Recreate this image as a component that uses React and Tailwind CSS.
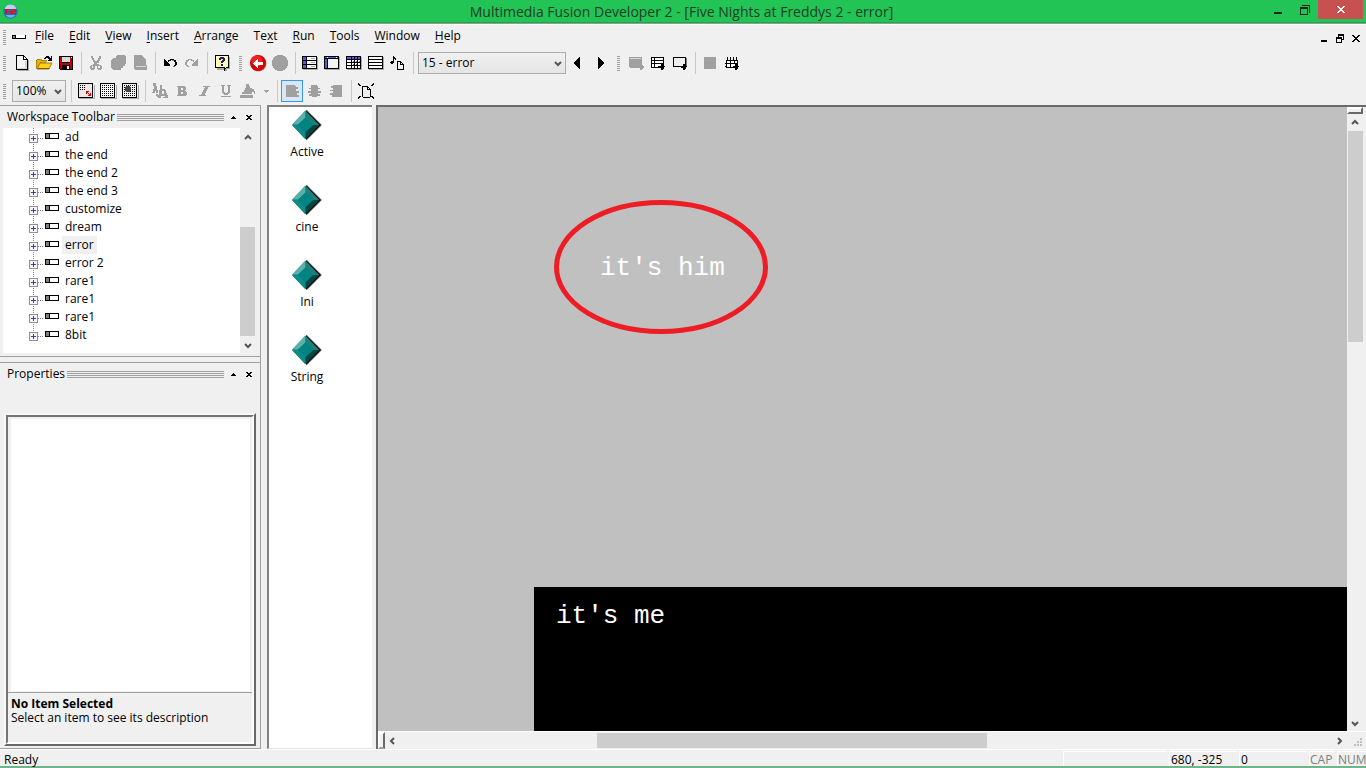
import React from "react";

const K = "#000";
const G = "#a0a0a0";

function Ico({ children, w = 18, h = 18 }) {
  return (
    <svg width={w} height={h} viewBox={`0 0 ${w} ${h}`} shapeRendering="crispEdges" fill="none" className="block shrink-0" aria-hidden="true">
      {children}
    </svg>
  );
}

const dots = (x0, y0, nx, ny, step = 2) => {
  let d = "";
  for (let j = 0; j < ny; j++) for (let i = 0; i < nx; i++) d += `M${x0 + i * step} ${y0 + j * step}h1v1h-1z`;
  return d;
};

const icons = {
  newFile: (
    <Ico>
      <path d="M5 16h10v1H5zM15 6h1v11h-1z" fill="#aaa" />
      <path d="M3.5 1.5h7l4 4v10h-11z" fill="#f4f4f4" stroke={K} />
      <path d="M10 2h1v3h3v1h-4z" fill={K} />
      <path d="M11 3h1v1h1v1h-2z" fill="#fff" />
      <path d="M12 7h2v8H5v-1h7z" fill="#d4d4d4" />
    </Ico>
  ),
  open: (
    <Ico>
      <path d="M1 6h1V5h4v1h5v2H5v2H4v2H3v2H1z" fill="#e8b400" stroke="#8a6500" strokeWidth="0.6" />
      <path d="M5 9h12l-3 6H2z" fill="#ffd21c" shapeRendering="auto" stroke="#8a6500" strokeWidth="0.8" />
      <path d="M3 14h11v1H2z" fill="#7a5800" />
      <path d="M9 4h1V3h1V2h3v1h1v1h1V2h1v5h-4V6h1V5h-1V4h-2v1H9z" fill={K} />
    </Ico>
  ),
  save: (
    <Ico>
      <path d="M2 2h14v14H3v-1H2z" fill={K} />
      <path d="M3 3h2v6h8V3h2v12H3z" fill="#b50010" />
      <path d="M5 3h8v5H5z" fill="#d8d8d8" />
      <path d="M5 11h8v4H5z" fill={K} />
      <path d="M10 12h2v3h-2z" fill="#fff" />
      <path d="M14 3h1v1h-1z" fill="#fff" />
    </Ico>
  ),
  cut: (
    <Ico>
      <path d="M4 2h2v2h1v2h1v1h2V6h1V4h1V2h2v3h-1v2h-1v2h-2v1h2v1h2v1h1v3h-1v1h-3v-1h-1v-3H8v3H7v1H4v-1H3v-3h1v-1h2v-1h1V8H6V6H5V4H4zM5 12v2h1v-2zM11 12v2h2v-2z" fill={G} fillRule="evenodd" />
    </Ico>
  ),
  copy: (
    <Ico>
      <path d="M8 1h7l2 2v7h-1v2h-2v2h-2v2H4v-1H3v-1H2V6h1V5h1V4h3V2h1z" fill={G} />
    </Ico>
  ),
  paste: (
    <Ico>
      <path d="M3 1h8v1h1v1h1v1h1v1h1v6h1v5H4v-1H3z" fill={G} />
      <path d="M5 12h10v1H5z" fill="#d8d8d8" />
    </Ico>
  ),
  undo: (
    <Ico>
      <path d="M3 5h1v1h1v1h1v1h1v1h1v1h1v2H3z" fill={K} />
      <path d="M7 6h2V5h4v1h2v2h1v3h-1v1h-1v1h-2v-1h1v-1h1V8h-1V7h-1V6h-2v1H8v1H7z" fill={K} />
      <path d="M12 12h2v1h-2zM11 6h2v1h-2z" fill="#777" />
    </Ico>
  ),
  redo: (
    <Ico>
      <path d="M15 5h-1v1h-1v1h-1v1h-1v1h-1v1H9v2h6z" fill={G} />
      <path d="M11 6H9V5H5v1H3v2H2v3h1v1h1v1h2v-1H5v-1H4V8h1V7h1V6h2v1h2v1h1z" fill={G} />
    </Ico>
  ),
  help: (
    <Ico>
      <path d="M4 3h13v12h-3v2h-2v-1h-8z" fill="#aaa" />
      <path d="M2.500 1.500h13v12h-2l-2.500 3v-3h-8.500z" fill="#fffbb0" stroke={K} />
      <path d="M6 4h1V3h4v1h1v3h-1v1h-1v1H8V7h1V6h1V5H8v1H6zM8 10h2v2H8z" fill="#1b1b80" />
    </Ico>
  ),
  back: (
    <Ico>
      <circle cx="9.500" cy="9.500" r="8" fill="#999" shapeRendering="auto" />
      <circle cx="9" cy="9" r="8" fill="#d80000" shapeRendering="auto" />
      <circle cx="8" cy="7" r="5.500" fill="#f32222" shapeRendering="auto" />
      <path d="M4 9h1V8h1V7h1V6h1V5h1v3h5v3H9v3H8v-1H7v-1H6v-1H5v-1H4z" fill="#fff" />
    </Ico>
  ),
  disc: (
    <Ico>
      <path d="M6 1h6v1h2v1h1v1h1v2h1v6h-1v2h-1v1h-1v1h-2v1H6v-1H4v-1H3v-1H2v-2H1V6h1V4h1V3h1V2h2z" fill={G} />
    </Ico>
  ),
  storyboard: (
    <Ico>
      <path d="M2 15h14V3h1v13H2z" fill="#aaa" />
      <path d="M1 2h15v13H1z" fill={K} />
      <path d="M2 3h3v3H2zM2 7h3v3H2zM2 11h3v3H2z" fill="#5a5ad8" />
      <path d="M6 3h9v3H6zM6 7h9v3H6zM6 11h9v3H6z" fill="#f8f8f8" />
      <path d="M10 4h4v1h-4zM10 8h4v1h-4zM10 12h4v1h-4z" fill="#aaa" />
    </Ico>
  ),
  frame: (
    <Ico>
      <path d="M2 15h14V3h1v13H2z" fill="#aaa" />
      <path d="M1 2h15v13H1z" fill={K} />
      <path d="M2 3h13v1H2zM2 5h2v9H2z" fill="#5a5ad8" />
      <path d="M5 5h10v9H5z" fill="#f4f4f4" />
      <path d="M4 3h1v1H4zM13 3h1v1h-1z" fill="#fff" />
    </Ico>
  ),
  events: (
    <Ico>
      <path d="M2 15h14V3h1v13H2z" fill="#aaa" />
      <path d="M1 2h15v13H1z" fill={K} />
      <path d="M2 6h4v2H2zM2 9h4v2H2zM2 12h4v2H2z" fill="#fff" />
      <path d="M2 3h4v2H2zM7 3h2v2H7zM10 3h2v2h-2zM13 3h2v2h-2z" fill="#5a5ad8" />
      <path d="M7 6h2v2H7zM10 6h2v2h-2zM13 6h2v2h-2zM7 9h2v2H7zM10 9h2v2h-2zM13 9h2v2h-2zM7 12h2v2H7zM10 12h2v2h-2zM13 12h2v2h-2z" fill="#fff" />
      <path d="M8 7h1v1H8zM11 7h1v1h-1zM11 10h1v1h-1zM14 7h1v1h-1zM8 10h1v1H8z" fill="#5a5ad8" />
    </Ico>
  ),
  list: (
    <Ico>
      <path d="M2 15h14V3h1v13H2z" fill="#aaa" />
      <path d="M1 2h15v13H1z" fill={K} />
      <path d="M2 3h13v2H2zM2 6h13v2H2zM2 9h13v2H2zM2 12h13v2H2z" fill="#fff" />
    </Ico>
  ),
  music: (
    <Ico>
      <path d="M4 2h1v1h1v1h1v2H6V5H5v4H4v1H2V9H1V8h1V7h2z" fill={K} />
      <path d="M8.500 7.500h3l3 3v5h-6z" fill="#f4f4f4" stroke={K} />
      <path d="M11 8h1v2h2v1h-3z" fill={K} />
    </Ico>
  ),
  prev: (
    <Ico>
      <path d="M5 8h1V7h1V6h1V5h1V4h1V3h1v12h-1v-1H9v-1H8v-1H7v-1H6v-1H5z" fill={K} />
    </Ico>
  ),
  next: (
    <Ico>
      <path d="M13 8h-1V7h-1V6h-1V5H9V4H8V3H7v12h1v-1h1v-1h1v-1h1v-1h1v-1h1z" fill={K} />
    </Ico>
  ),
  runProject: (
    <Ico>
      <path d="M2 3h13v8h1v1h1v2h-1v1h-1v1h-2v-2H3v-1H2z" fill={G} />
      <path d="M3 4h11v1H3z" fill="#d8d8d8" />
    </Ico>
  ),
  runEvents: (
    <Ico>
      <path d="M2 3h13v11H2z" fill={K} />
      <path d="M3 4h2v2H3zM6 4h8v2H6zM3 7h2v2H3zM6 7h8v2H6zM3 10h2v3H3zM6 10h6v3H6z" fill="#fff" />
      <path d="M9 12h3v-2h2v1h1v1h1v1h-1v2h-1v1h-2v-2H9z" fill={K} />
    </Ico>
  ),
  runFrame: (
    <Ico>
      <path d="M3 12h12V4h1v9H3z" fill="#777" />
      <path d="M2 3h13v10H2z" fill={K} />
      <path d="M3 4h11v8H3z" fill="#eee" />
      <path d="M10 12h2v-2h2v1h1v1h1v1h-1v2h-1v1h-2v-2h-2z" fill={K} />
    </Ico>
  ),
  stop: (
    <Ico>
      <path d="M3 3h12v12H3z" fill={G} />
    </Ico>
  ),
  build: (
    <Ico>
      <path d="M4 3h1v3H4zM7 3h1v3H7zM10 3h1v3h-1zM13 3h1v3h-1zM3 6h12v8H3zM2 9h1v1H2zM2 12h1v1H2z" fill={K} />
      <path d="M4 7h3v2H4zM8 7h3v2H8zM12 7h2v2h-2zM4 10h3v3H4zM8 10h4v3H8z" fill="#fff" />
      <path d="M10 12h2v-2h2v1h1v1h1v1h-1v2h-1v1h-2v-2h-2z" fill={K} />
    </Ico>
  ),
  gridSetup: (
    <Ico>
      <path d="M2 16h15V3h1v14H2z" fill="#aaa" />
      <path d="M1.500 1.500h14v14h-14z" fill="#f0e8e8" stroke={K} />
      <path d={dots(3, 3, 3, 3)} fill={K} />
      <path d="M9 9h3v1h-1v1h1v1h1v-1h1v3h-3v-1h1v-1h-1v-1h-1v1H9z" fill="#e00000" />
    </Ico>
  ),
  grid: (
    <Ico>
      <path d="M2 16h15V3h1v14H2z" fill="#aaa" />
      <path d="M1.500 1.500h14v14h-14z" fill="#f4f4f4" stroke={K} />
      <path d={dots(3, 3, 6, 6)} fill={K} />
    </Ico>
  ),
  snap: (
    <Ico>
      <path d="M2 16h15V3h1v14H2z" fill="#aaa" />
      <path d="M1.500 1.500h14v14h-14z" fill="#f4f4f4" stroke={K} />
      <path d={dots(3, 3, 6, 6)} fill={K} />
      <path d="M5 4h4v1h1v4H9v1H5V9H4V5h1z" fill="#444" />
    </Ico>
  ),
  font: (
    <Ico>
      <path d="M2 1h3v3h1v4h1v3H5V9H4v2H1v-1h1V7h1V4H2zM9 3h2v4h3v1h1v6h-5v2H8V8h1zM11 9v3h2V9z" fill={G} fillRule="evenodd" />
      <path d="M5 12h2v1h2v3H7v-1H6v-1H5zM14 11h2v2h1v3h-5v-1h2z" fill={G} />
    </Ico>
  ),
  bold: (
    <Ico>
      <path d="M4 4h8v1h1v3h-1v1h1v1h1v3h-1v1H4v-1h1V5H4zM8 6v2h2V6zM8 10v2h2v-2z" fill={G} fillRule="evenodd" />
    </Ico>
  ),
  italic: (
    <Ico>
      <path d="M8 4h7v1h-2v2h-1v2h-1v2h-1v2h1v1H4v-1h2v-1h1v-2h1V8h1V6h1V5H8z" fill={G} />
    </Ico>
  ),
  underline: (
    <Ico>
      <path d="M4 3h4v1H7v6h1v1h2v-1h1V4h-1V3h4v1h-1v7h-1v1h-1v1H7v-1H6v-1H5V4H4zM4 14h10v1H4z" fill={G} />
    </Ico>
  ),
  color: (
    <Ico>
      <path d="M7 2h3v2h1v2h2v1h2v2h1v3h-1v-2h-2v2H3v-2h2V8h1V6h1zM1 13h13v3H1z" fill={G} />
    </Ico>
  ),
  left: (
    <Ico>
      <path d="M3 3h9v1h1v1h2v2h-2v2h3v2h-2v2h2v2H3z" fill={G} />
    </Ico>
  ),
  center: (
    <Ico>
      <path d="M6 3h6v1h1v2h2v1h-2v2h3v2h-3v1h2v2h-3v1H7v-1H4v-2h2v-1H3V9h3V7H4V6h2z" fill={G} />
    </Ico>
  ),
  right: (
    <Ico>
      <path d="M6 3h9v12H5v-2H3v-2h3V9H3V8h3V6H4V4h2z" fill={G} />
    </Ico>
  ),
  fit: (
    <Ico>
      <path d="M5 4h6v1h1v1h1v1h1v8h-1v1H6v-1H5z" fill={K} />
      <path d="M6 5h4v3h3v7H6z" fill="#f0f0f0" />
      <path d="M11 6h1v1h-1z" fill="#fff" />
      <path d="M1 1h1v1h1v1h1v1H2V3H1zM17 1h-1v1h-1v1h-1v1h2V3h1zM1 17h1v-1h1v-1h1v-1H2v1H1zM17 17h-1v-1h-1v-1h-1v-1h2v1h1z" fill={K} />
    </Ico>
  ),
};

function Tool({ icon, label, active }) {
  return (
    <button
      type="button"
      aria-label={label}
      className={
        active
          ? "flex h-[22px] w-[22px] shrink-0 items-center justify-center border border-[#3399ff] bg-[#d8e6f5]"
          : "flex h-[22px] w-[22px] shrink-0 items-center justify-center"
      }
    >
      {icons[icon]}
    </button>
  );
}

const Sep = () => (
  <span className="flex h-[22px] w-2 shrink-0 justify-center">
    <span className="w-px bg-[#c8c8c8]" />
  </span>
);

const Grip = ({ first }) => (
  <span className={first ? "flex w-[11px] shrink-0 pl-[3px]" : "flex w-[14px] shrink-0 justify-center"}>
    <Ico w={3} h={15}>
      <path d="M0 0h3v1H0zM0 2h3v1H0zM0 4h3v1H0zM0 6h3v1H0zM0 8h3v1H0zM0 10h3v1H0zM0 12h3v1H0zM0 14h3v1H0z" fill={G} />
    </Ico>
  </span>
);

function Chevron({ dir }) {
  const d = {
    up: "M1 5l3-3 3 3",
    down: "M1 3l3 3 3-3",
    left: "M5 1L2 4l3 3",
    right: "M3 1l3 3-3 3",
  }[dir];
  return (
    <svg width="8" height="8" viewBox="0 0 8 8" fill="none" aria-hidden="true">
      <path d={d} stroke="#555" strokeWidth="2" />
    </svg>
  );
}

function Picker({ label, value, wide }) {
  return (
    <span className={wide ? "relative mx-px w-[148px] shrink-0" : "relative mx-px w-[54px] shrink-0"}>
      <select
        aria-label={label}
        defaultValue={value}
        className="block h-[22px] w-full appearance-none border border-[#acacac] bg-linear-to-b from-[#f0f0f0] to-[#e5e5e5] pl-[3px] text-xs leading-5"
      >
        <option>{value}</option>
      </select>
      <span className="pointer-events-none absolute right-1 top-[7px]">
        <Chevron dir="down" />
      </span>
    </span>
  );
}

const menus = [
  ["", "F", "ile"],
  ["", "E", "dit"],
  ["", "V", "iew"],
  ["", "I", "nsert"],
  ["", "A", "rrange"],
  ["Te", "x", "t"],
  ["", "R", "un"],
  ["", "T", "ools"],
  ["", "W", "indow"],
  ["", "H", "elp"],
];

function PanelHeader({ title }) {
  return (
    <div className="flex h-5 items-center pl-[7px] pr-[3px]">
      <h2 className="text-xs leading-4">{title}</h2>
      <span className="ml-[2px] flex h-[7px] grow flex-col justify-between">
        <span className="h-px bg-[#a0a0a0]" />
        <span className="h-px bg-[#a0a0a0]" />
        <span className="h-px bg-[#a0a0a0]" />
        <span className="h-px bg-[#a0a0a0]" />
      </span>
      <button type="button" aria-label={"Collapse " + title} className="ml-px flex h-4 w-4 items-center justify-center">
        <Ico w={5} h={3}>
          <path d="M2 0h1v1h1v1h1v1H0V2h1V1h1z" fill={K} />
        </Ico>
      </button>
      <button type="button" aria-label={"Close " + title} className="flex h-4 w-4 items-center justify-center">
        <Ico w={6} h={5}>
          <path d="M0 0h2v1h2V0h2v1H5v1H4v1h1v1h1v1H4V4H2v1H0V4h1V3h1V2H1V1H0z" fill={K} />
        </Ico>
      </button>
    </div>
  );
}

const frames = ["ad", "the end", "the end 2", "the end 3", "customize", "dream", "error", "error 2", "rare1", "rare1", "rare1", "8bit"];

function TreeRow({ name, last }) {
  return (
    <li className="flex h-[18px] items-center pl-[26px]">
      <svg width="32" height="18" viewBox="0 0 32 18" shapeRendering="crispEdges" fill="none" aria-hidden="true" className="shrink-0">
        <path d={last ? "M4.500 0v8" : "M4.500 0v18"} stroke="#808080" strokeDasharray="1 1" />
        <path d="M9 10.500h6" stroke="#808080" strokeDasharray="1 1" />
        <path d="M0.500 6.500h8v8h-8z" fill="#f6f6f6" stroke="#919191" />
        <path d="M2 10h5v1H2zM4 8h1v5H4z" fill="#2b4a9b" />
        <path d="M16 5h14v6H16z" fill={K} />
        <path d="M17 6h3v4h-3z" fill="#808080" />
        <path d="M21 6h8v4h-8z" fill="#fff" />
      </svg>
      <span className={name === "error" ? "ml-px bg-[#f0f0f0] px-[3px] text-xs leading-[18px]" : "ml-px px-[3px] text-xs leading-[18px]"}>{name}</span>
    </li>
  );
}

function Diamond() {
  return (
    <svg width="32" height="32" viewBox="0 0 32 32" aria-hidden="true">
      <path d="M16 1l15 15-15 15-2-2 12-13L14 3z" fill="#8c8484" />
      <path d="M15 1l15 15-15 15z" fill="#000" />
      <path d="M14 2l14 14-14 14L1 16z" fill="#008080" />
      <path d="M14.500 1.500L1 15.500h6l7.500-7z" fill="#5cb0a8" />
      <path d="M14.500 1.500v7l7.500 7.500h6z" fill="#1c7f7c" />
      <path d="M1 16l13.500 14v-7L7 16z" fill="#108a86" />
      <path d="M28 16L14.500 30v-7L22 16z" fill="#004542" />
      <path d="M14.500 8.500L22 16l-7.500 7L7 16z" fill="#008482" />
    </svg>
  );
}

export default function App() {
  return (
    <div className="flex h-screen flex-col overflow-hidden bg-[#f0f0f0] font-['Open_Sans','Noto_Sans',sans-serif] text-xs text-black">
      <header className="flex h-6 shrink-0 border-b border-[#8f9f94] bg-[#23c456] shadow-[inset_0_-1px_0_#1ca648]">
        <div className="flex w-[98px] items-center pl-[3px]">
          <svg width="15" height="15" viewBox="0 0 15 15" aria-hidden="true">
            <circle cx="7.500" cy="7.500" r="7.200" fill="#2a6cb0" />
            <path d="M1.500 5a6.300 6.300 0 0 1 12 0z" fill="#b8d4ea" />
            <path d="M2.500 11a6 6 0 0 0 10 0z" fill="#6ab4e8" />
            <path d="M2 5h5v1H4v1h2v1H4v2H2zM8 5h5v3h-3v1h3v1H7V7h4V6H8z" fill="#e01020" />
          </svg>
        </div>
        <h1 className="grow text-center text-sm leading-[23px] text-[#1d3d27]">Multimedia Fusion Developer 2 - [Five Nights at Freddys 2 - error]</h1>
        <div className="flex pr-[3px]">
          <button type="button" aria-label="Minimize" className="flex h-[19px] w-[26px] items-center justify-center">
            <Ico w={8} h={10}>
              <path d="M0 7h8v2H0z" fill="#222" />
            </Ico>
          </button>
          <button type="button" aria-label="Restore" className="flex h-[19px] w-[27px] items-center justify-center">
            <Ico w={10} h={10}>
              <path d="M2 0h8v8H9V1H2zM0 2h8v8H0zM1 4v5h6V4z" fill="#222" fillRule="evenodd" />
            </Ico>
          </button>
          <button type="button" aria-label="Close" className="flex h-[19px] w-[45px] items-center justify-center bg-[#c75050]">
            <Ico w={8} h={7}>
              <path d="M0 0h2v1h1v1h2V1h1V0h2v1H7v1H6v1H5v1h1v1h1v1h1v1H6V6H5V5H3v1H2v1H0V6h1V5h1V4h1V3H2V2H1V1H0z" fill="#fff" />
            </Ico>
          </button>
        </div>
      </header>

      <nav className="flex h-[25px] shrink-0 items-center border-t border-white pr-[2px]">
        <Grip first />
        <span className="flex w-6 pl-px">
          <Ico w={14} h={5}>
            <path d="M0 0h4v2h9V0h1v4H0z" fill={K} />
            <path d="M4 0h9v3H4z" fill="#fff" />
            <path d="M1 1h2v2H1z" fill="#808080" />
          </Ico>
        </span>
        <ul className="flex grow gap-[15px] pb-[2px]">
          {menus.map(([a, b, c]) => (
            <li key={a + b + c}>
              <button type="button" className="block text-xs leading-4">
                {a}
                <span className="underline underline-offset-2">{b}</span>
                {c}
              </button>
            </li>
          ))}
        </ul>
        <div className="flex pt-[2px]">
          <button type="button" aria-label="Minimize document" className="flex h-4 w-4 items-center justify-center">
            <Ico w={6} h={8}>
              <path d="M0 6h6v2H0z" fill={K} />
            </Ico>
          </button>
          <button type="button" aria-label="Restore document" className="flex h-4 w-4 items-center justify-center">
            <Ico w={8} h={9}>
              <path d="M2 0h6v6H6V5h1V2H3v1H2zM0 3h6v6H0zM1 5v3h4V5z" fill={K} fillRule="evenodd" />
            </Ico>
          </button>
          <button type="button" aria-label="Close document" className="flex h-4 w-4 items-center justify-center">
            <Ico w={8} h={7}>
              <path d="M0 0h2v1h1v1h2V1h1V0h2v1H7v1H6v1H5v1h1v1h1v1h1v1H6V6H5V5H3v1H2v1H0V6h1V5h1V4h1V3H2V2H1V1H0z" fill={K} />
            </Ico>
          </button>
        </div>
      </nav>

      <div role="toolbar" aria-label="Standard" className="flex h-7 shrink-0 items-center">
        <Grip first />
        <Tool icon="newFile" label="New" />
        <Tool icon="open" label="Open" />
        <Tool icon="save" label="Save" />
        <Sep />
        <Tool icon="cut" label="Cut" />
        <Tool icon="copy" label="Copy" />
        <Tool icon="paste" label="Paste" />
        <Sep />
        <Tool icon="undo" label="Undo" />
        <Tool icon="redo" label="Redo" />
        <Sep />
        <Tool icon="help" label="Help" />
        <Grip />
        <Tool icon="back" label="Back" />
        <Tool icon="disc" label="Forward" />
        <Sep />
        <Tool icon="storyboard" label="Storyboard editor" />
        <Tool icon="frame" label="Frame editor" />
        <Tool icon="events" label="Event editor" />
        <Tool icon="list" label="Event list editor" />
        <Tool icon="music" label="Data elements" />
        <Sep />
        <Picker label="Frame" value="15 - error" wide />
        <Tool icon="prev" label="Previous frame" />
        <Tool icon="next" label="Next frame" />
        <Grip />
        <Tool icon="runProject" label="Run project" />
        <Tool icon="runEvents" label="Run application" />
        <Tool icon="runFrame" label="Run frame" />
        <Sep />
        <Tool icon="stop" label="Stop" />
        <Tool icon="build" label="Build and run" />
      </div>

      <div role="toolbar" aria-label="Format" className="flex h-7 shrink-0 items-center">
        <Grip first />
        <Picker label="Zoom" value="100%" />
        <Sep />
        <Tool icon="gridSetup" label="Grid setup" />
        <Tool icon="grid" label="Show grid" />
        <Tool icon="snap" label="Snap to grid" />
        <Sep />
        <Tool icon="font" label="Font" />
        <Tool icon="bold" label="Bold" />
        <Tool icon="italic" label="Italic" />
        <Tool icon="underline" label="Underline" />
        <Tool icon="color" label="Text color" />
        <button type="button" aria-label="More colors" className="flex h-[22px] w-[14px] shrink-0 items-center justify-center">
          <Ico w={5} h={3}>
            <path d="M0 0h5v1H4v1H3v1H2V2H1V1H0z" fill={G} />
          </Ico>
        </button>
        <Sep />
        <Tool icon="left" label="Align left" active />
        <Tool icon="center" label="Align center" />
        <Tool icon="right" label="Align right" />
        <Sep />
        <Tool icon="fit" label="Fit to window" />
      </div>

      <div className="flex min-h-0 grow">
        <aside className="flex w-[261px] shrink-0 flex-col border-b border-r border-t border-[#a0a0a0]">
          <section className="flex flex-col border-b border-[#a0a0a0] pb-[3px] pt-px">
            <PanelHeader title="Workspace Toolbar" />
            <div className="ml-[3px] mr-[5px] mt-px flex h-[225px] bg-white">
              <ul className="grow">
                {frames.map((f, i) => (
                  <TreeRow key={i} name={f} last={i === frames.length - 1} />
                ))}
              </ul>
              <div className="flex w-[15px] flex-col items-center bg-[#f0f0f0]">
                <span className="flex h-[99px] pt-[6px]">
                  <Chevron dir="up" />
                </span>
                <span className="h-[109px] w-full bg-[#cdcdcd]" />
                <span className="flex grow items-center">
                  <Chevron dir="down" />
                </span>
              </div>
            </div>
          </section>
          <section className="mt-[5px] flex min-h-0 grow flex-col border-t border-[#a0a0a0] pt-px">
            <PanelHeader title="Properties" />
            <div className="mb-[2px] ml-[4px] mr-1 mt-[29px] flex min-h-0 grow flex-col border-2 border-b-[#696969] border-l-[#f8f8f8] border-r-[#696969] border-t-[#f8f8f8]">
              <div className="flex min-h-0 grow flex-col border-2 border-b-white border-l-[#757575] border-r-white border-t-[#757575]">
                <div className="ml-[3px] mr-[2px] mt-[2px] grow bg-white" />
                <div className="mt-px h-[50px] border-t border-[#a0a0a0] pl-[3px] pt-1">
                  <p className="text-xs font-bold leading-[14px]">No Item Selected</p>
                  <p className="text-xs leading-[14px]">Select an item to see its description</p>
                </div>
              </div>
            </div>
          </section>
        </aside>

        <aside className="ml-[6px] w-[105px] shrink-0 border-b border-l-2 border-t-2 border-b-[#e3e3e3] border-l-[#808080] border-t-[#808080] bg-white">
          <ul className="flex w-[76px] flex-col items-center pt-[2px]">
            {["Active", "cine", "Ini", "String"].map((n) => (
              <li key={n} className="flex h-[75px] flex-col items-center">
                <Diamond />
                <span className="mt-[3px] text-xs leading-4">{n}</span>
              </li>
            ))}
          </ul>
        </aside>

        <main className="ml-1 flex min-w-0 grow flex-col border-l-2 border-t-2 border-[#696969]">
          <div className="flex min-h-0 grow">
            <div className="relative min-w-0 grow overflow-hidden bg-[#c0c0c0]">
              <svg className="absolute left-[176px] top-[92px]" width="216" height="136" viewBox="0 0 216 136" aria-hidden="true">
                <ellipse cx="107" cy="68" rx="104.500" ry="64.500" fill="none" stroke="#ee1c24" strokeWidth="5" />
              </svg>
              <p className="absolute left-[222px] top-[145px] font-['Liberation_Mono',monospace] text-[26px] leading-8 text-white">it's him</p>
              <div className="absolute bottom-0 left-[156px] right-0 top-[480px] bg-black">
                <p className="pl-[22px] pt-[13px] font-['Liberation_Mono',monospace] text-[26px] leading-8 text-white">it's me</p>
              </div>
            </div>
            <div className="flex w-[19px] shrink-0 flex-col bg-[#f0f0f0] pr-[3px]">
              <span className="h-[7px] shrink-0 border-2 border-b-[#696969] border-l-white border-r-[#696969] border-t-white" />
              <span className="flex h-[17px] shrink-0 items-center justify-center">
                <Chevron dir="up" />
              </span>
              <span className="ml-px h-[211px] bg-[#cdcdcd]" />
              <span className="flex grow items-end justify-center pb-1">
                <Chevron dir="down" />
              </span>
            </div>
          </div>
          <div className="flex h-[18px] shrink-0 items-center border-t border-white">
            <span className="h-[17px] w-[7px] border-2 border-b-[#a0a0a0] border-l-white border-r-[#696969] border-t-white" />
            <span className="ml-1 flex grow items-center">
              <Chevron dir="left" />
              <span className="grow-[201]" />
              <span className="h-[15px] w-[390px] bg-[#cdcdcd]" />
              <span className="grow-[349]" />
              <Chevron dir="right" />
            </span>
            <span className="flex w-[23px] justify-end pr-1 pt-[3px]">
              <Ico w={8} h={8}>
                <path d="M6 0h2v2H6zM3 3h2v2H3zM6 3h2v2H6zM0 6h2v2H0zM3 6h2v2H3zM6 6h2v2H6z" fill="#bfbfbf" />
              </Ico>
            </span>
          </div>
        </main>
      </div>

      <footer className="flex h-[19px] shrink-0 border-b-2 border-[#6fb589] shadow-[inset_0_1px_0_#fff]">
        <p className="grow pl-1 pt-[3px] leading-4">Ready</p>
        <div className="flex gap-[2px] pt-[2px] leading-4">
          <span className="w-[104px] border-l border-t border-white" />
          <span className="w-[68px] border-l border-t border-white pl-px">680, -325</span>
          <span className="w-[68px] border-l border-t border-white pl-px">0</span>
          <span className="w-[26px] border-l border-t border-white text-[#808080]">CAP</span>
          <span className="w-[29px] border-l border-t border-white text-[#808080]">NUM</span>
        </div>
      </footer>
    </div>
  );
}
